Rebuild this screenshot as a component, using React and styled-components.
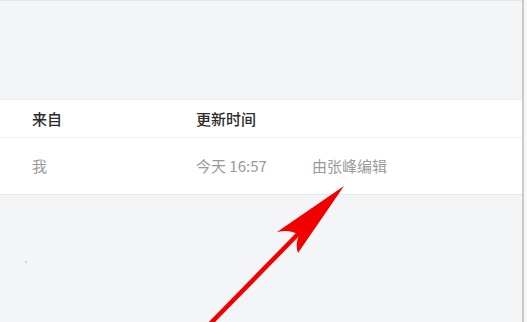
import React from 'react';
import styled, { createGlobalStyle } from 'styled-components';

const GlobalStyle = createGlobalStyle`
  html, body {
    margin: 0;
    padding: 0;
    background: #f4f5f7;
  }
  body {
    font-family: "Noto Sans CJK SC", "Noto Sans", sans-serif;
  }
`;

function App() {
  return (
    <Page>
      <GlobalStyle />
      <Main>
        <TopArea />
        <Table>
          <HeaderRow>
            <Cell width="164px" tone="head">来自</Cell>
            <Cell tone="head">更新时间</Cell>
          </HeaderRow>
          <DataRow>
            <Cell width="164px" tone="muted">我</Cell>
            <Cell width="116px" tone="muted">今天 16:57</Cell>
            <Cell tone="muted">由张峰编辑</Cell>
          </DataRow>
        </Table>
        <BottomArea>
          <Dot />
        </BottomArea>
      </Main>
      <ScrollEdge />
      <Arrow viewBox="0 0 527 322" width="527" height="322">
        <line x1="208" y1="326" x2="300" y2="232" stroke="#f20000" strokeWidth="4.5" strokeLinecap="round" />
        <path d="M344 186 L277 232 Q290 229 299 235 Q295 245 298 253 Z" fill="#f20000" />
      </Arrow>
    </Page>
  );
}

const Page = styled.div`
  position: relative;
  display: flex;
  width: 527px;
  height: 322px;
  overflow: hidden;
  background: #f4f5f7;
`;

const Main = styled.div`
  display: flex;
  flex-direction: column;
  width: 522px;
`;

const TopArea = styled.div`
  height: 98px;
  border-top: 1px solid #e6e7ea;
  background: #f4f5f7;
`;

const Table = styled.div`
  display: flex;
  flex-direction: column;
  background: #ffffff;
  border-top: 1px solid #eceef1;
  border-bottom: 1px solid #e8e9ec;
`;

const HeaderRow = styled.div`
  display: flex;
  align-items: center;
  height: 37px;
  padding-left: 32px;
  border-bottom: 1px solid #eff0f2;
`;

const DataRow = styled.div`
  display: flex;
  align-items: center;
  height: 56px;
  padding-left: 32px;
`;

const Cell = styled.div`
  flex: 0 0 ${(p) => p.width || 'auto'};
  font-size: 15px;
  line-height: 20px;
  white-space: nowrap;
  font-weight: ${(p) => (p.tone === 'head' ? 500 : 400)};
  color: ${(p) => (p.tone === 'head' ? '#2b2b2b' : '#9a9a9a')};
`;

const BottomArea = styled.div`
  flex: 1;
  position: relative;
  background: #f4f5f7;
`;

const Dot = styled.span`
  position: absolute;
  left: 25px;
  top: 66px;
  width: 2px;
  height: 2px;
  border-radius: 50%;
  background: #c4c6ca;
`;

const ScrollEdge = styled.div`
  width: 2px;
  background: #c9cbcf;
  border-right: 3px solid #f7f7f8;
`;

const Arrow = styled.svg`
  position: absolute;
  left: 0;
  top: 0;
  pointer-events: none;
`;

export default App;
